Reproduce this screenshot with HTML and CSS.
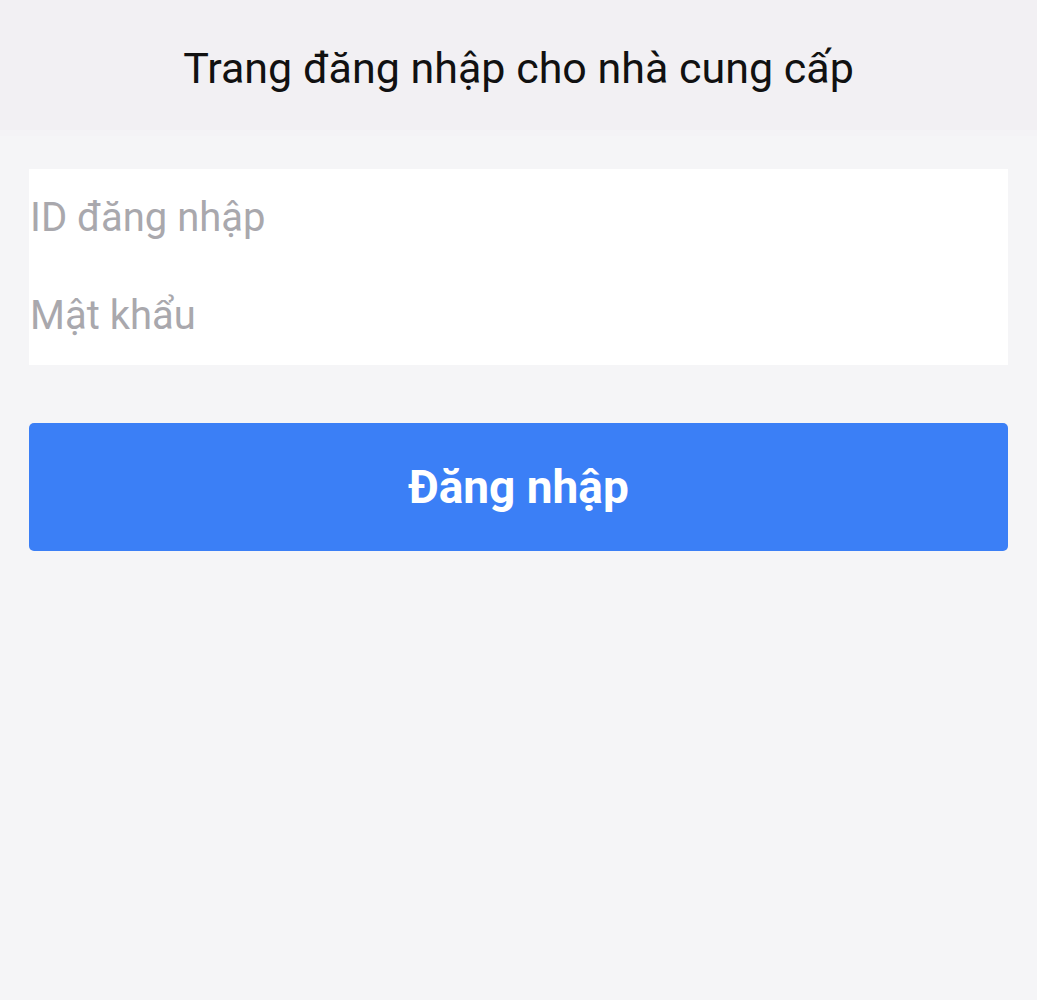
FILE: index.html
```html
<!DOCTYPE html>
<html lang="vi">
<head>
<meta charset="utf-8">
<title>Trang đăng nhập cho nhà cung cấp</title>
<link rel="stylesheet" href="styles.css">
</head>
<body>
<header class="topbar">
  <h1 class="title">Trang đăng nhập cho nhà cung cấp</h1>
</header>
<main class="content">
  <form class="form">
    <div class="fields">
      <input class="field" type="text" placeholder="ID đăng nhập">
      <input class="field" type="password" placeholder="Mật khẩu">
    </div>
    <button class="submit" type="button">Đăng nhập</button>
  </form>
</main>
</body>
</html>
```
FILE: styles.css
```css
html, body {
  margin: 0;
  padding: 0;
  background: #f5f5f7;
  height: 100%;
}
body {
  font-family: Roboto, "Noto Sans", sans-serif;
}
.topbar {
  height: 130px;
  background: #f2f0f3;
  border-bottom: 6px solid #f4f3f6;
  display: flex;
  align-items: center;
  justify-content: center;
}
.title {
  margin: 0;
  font-family: Roboto, "Noto Sans", sans-serif;
  font-weight: normal;
  font-size: 43px;
  color: #111;
  padding-top: 6px;
}
.content {
  padding: 33px 29px 0;
}
.form {
  display: flex;
  flex-direction: column;
  gap: 58px;
}
.fields {
  background: #fff;
  display: flex;
  flex-direction: column;
  height: 196px;
  justify-content: center;
}
.field {
  border: none;
  outline: none;
  background: transparent;
  font-family: Roboto, sans-serif;
  font-size: 40px;
  color: #333;
  padding: 0 1px;
  height: 98px;
  line-height: 98px;
}
.field::placeholder {
  color: #a9a8ad;
}
.submit {
  height: 128px;
  border: none;
  border-radius: 5px;
  background: #3b7ff6;
  color: #fff;
  font-family: Roboto, sans-serif;
  font-weight: bold;
  font-size: 46px;
  padding: 0;
}
```
